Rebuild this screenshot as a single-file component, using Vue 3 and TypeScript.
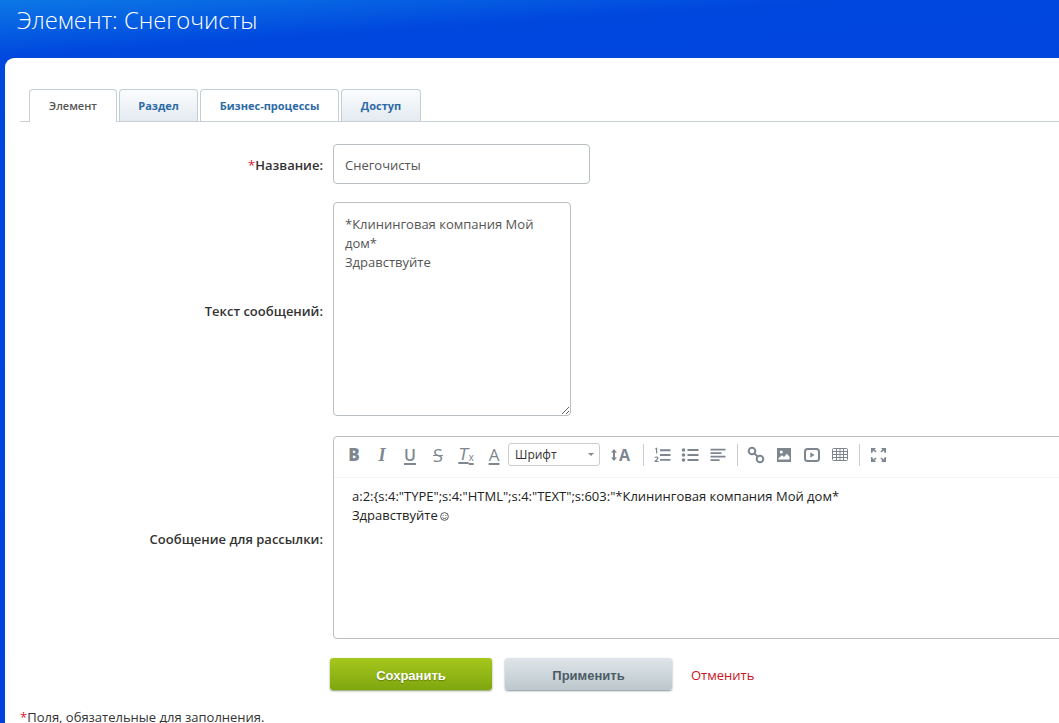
<template>
  <div class="page">
    <h1 class="title">Элемент: {{ name }}</h1>
    <div class="sheet">
      <div class="tabs">
        <div
          v-for="tab in tabs"
          :key="tab.label"
          class="tab"
          :class="tab.kind"
        >{{ tab.label }}</div>
      </div>

      <form class="form" @submit.prevent>
        <div class="row row-name">
          <label class="label"><span class="req">*</span>Название:</label>
          <input class="input" type="text" :value="name" />
        </div>
        <div class="row row-text">
          <label class="label">Текст сообщений:</label>
          <textarea class="area" :value="messageText"></textarea>
        </div>
        <div class="row row-editor">
          <label class="label">Сообщение для рассылки:</label>
          <div class="editor">
            <div class="toolbar">
              <span class="tool t-bold">B</span>
              <span class="tool t-italic">I</span>
              <span class="tool t-under">U</span>
              <span class="tool t-strike">S</span>
              <span class="tool t-clear">T<small>x</small></span>
              <span class="tool t-color">A</span>
              <div class="select">Шрифт<i class="caret"></i></div>
              <span class="tool t-size">
                <svg width="8" height="14" viewBox="0 0 8 14"><path d="M4 1 7 4.500H5V9.500H7L4 13 1 9.500H3V4.500H1Z" /></svg>
                <b>A</b>
              </span>
              <i class="sep"></i>
              <span class="tool">
                <svg width="18" height="16" viewBox="0 0 18 16">
                  <path d="M2.300 1.300 4.200 .5V6.500H3V2.300L2.300 2.500Z" />
                  <path d="M1.500 15V14C3.600 12.300 4.200 11.700 4.100 11.100 3.900 10.300 2.700 10.400 1.800 11L1.500 10C3 9 5.500 9.300 5.500 11.100 5.500 12 4.800 12.800 3.500 13.900H5.600V15Z" />
                  <path d="M7 2.300H17.500V4.200H7ZM7 7.100H17.500V9H7ZM7 11.900H17.500V13.800H7Z" />
                </svg>
              </span>
              <span class="tool">
                <svg width="18" height="16" viewBox="0 0 18 16">
                  <circle cx="2.500" cy="3" r="1.800" /><circle cx="2.500" cy="8" r="1.800" /><circle cx="2.500" cy="13" r="1.800" />
                  <path d="M6.500 2.100H17.500V3.900H6.500ZM6.500 7.100H17.500V8.900H6.500ZM6.500 12.100H17.500V13.900H6.500Z" />
                </svg>
              </span>
              <span class="tool">
                <svg width="16" height="14" viewBox="0 0 16 14">
                  <path d="M.500 .800H15.500V2.500H.500ZM.500 4.300H11.500V6H.500ZM.500 7.800H15.500V9.500H.500ZM.500 11.300H9.500V13H.500Z" />
                </svg>
              </span>
              <i class="sep"></i>
              <span class="tool">
                <svg width="18" height="18" viewBox="0 0 18 18" class="outline">
                  <circle cx="5" cy="5" r="3.300" /><circle cx="13" cy="13" r="3.300" />
                  <path d="M7.500 7.500 10.500 10.500" />
                </svg>
              </span>
              <span class="tool">
                <svg width="14" height="14" viewBox="0 0 14 14">
                  <path fill-rule="evenodd" d="M0 0H14V14H0ZM1.500 11.500H12.500V8.800L9.800 5.800 7 9 5 7.300 1.500 10.300Z" />
                  <circle class="spot" cx="4.300" cy="4" r="1.500" />
                </svg>
              </span>
              <span class="tool">
                <svg width="16" height="14" viewBox="0 0 16 14" class="outline">
                  <rect x="1" y="1" width="14" height="12" rx="2.500" />
                  <path class="solid" d="M6.300 4.300 10.500 7 6.300 9.700Z" />
                </svg>
              </span>
              <span class="tool">
                <svg width="16" height="13" viewBox="0 0 16 13" class="outline thin">
                  <rect x=".5" y=".5" width="15" height="12" rx="1" />
                  <path d="M.5 3.500H15.500M.5 6.500H15.500M.5 9.500H15.500M4.500 .5V12.500M8 .5V12.500M11.500 .5V12.500" />
                </svg>
              </span>
              <i class="sep"></i>
              <span class="tool">
                <svg width="15" height="14" viewBox="0 0 15 14">
                  <path d="M0 0H5L3.600 1.400 5.600 3.400 4.400 4.600 2.400 2.600 1.300 4.800 0 5ZM15 0H10L11.400 1.400 9.400 3.400 10.600 4.600 12.600 2.600 13.700 4.800 15 5ZM0 14H5L3.600 12.600 5.600 10.600 4.400 9.400 2.400 11.400 1.300 9.200 0 9ZM15 14H10L11.400 12.600 9.400 10.600 10.600 9.400 12.600 11.400 13.700 9.200 15 9Z" />
                </svg>
              </span>
            </div>
            <div class="content">
              <div>{{ editorLine }}</div>
              <div class="line-smile">Здравствуйте
                <svg class="smile" width="9" height="9" viewBox="0 0 10 10">
                  <circle cx="5" cy="5" r="4.300" />
                  <path d="M2.800 6C3.300 7.600 6.700 7.600 7.200 6" />
                  <path d="M3.500 3.300V4.300M6.500 3.300V4.300" />
                </svg>
              </div>
            </div>
          </div>
        </div>

        <div class="actions">
          <button class="btn btn-save" type="submit">Сохранить</button>
          <button class="btn btn-apply" type="button">Применить</button>
          <a class="cancel" href="#">Отменить</a>
        </div>
      </form>

      <p class="note"><span class="req">*</span>Поля, обязательные для заполнения.</p>
    </div>
  </div>
</template>

<script setup lang="ts">
const name = 'Снегочисты'
const messageText = '*Клининговая компания Мой дом*\nЗдравствуйте'
const editorLine = 'a:2:{s:4:"TYPE";s:4:"HTML";s:4:"TEXT";s:603:"*Клининговая компания Мой дом*'

const tabs = [
  { label: 'Элемент', kind: 'active' },
  { label: 'Раздел', kind: 'plain' },
  { label: 'Бизнес-процессы', kind: 'light' },
  { label: 'Доступ', kind: 'plain' }
]
</script>

<style>
html,
body {
  margin: 0;
  overflow: hidden;
}
</style>

<style scoped>
.page {
  height: 723px;
  overflow: hidden;
  background: linear-gradient(176deg, #0c78e6 0, #0047de 58px, #0040e0 100%);
  font-family: "Open Sans", "Liberation Sans", sans-serif;
}

.title {
  margin: 0;
  height: 58px;
  box-sizing: border-box;
  padding: 2px 0 0 17px;
  color: #fff;
  font-size: 23.8px;
  font-weight: 300;
  line-height: 36px;
}

.sheet {
  margin-left: 5px;
  height: 665px;
  box-sizing: border-box;
  padding-top: 31px;
  background: #fff;
  border-radius: 9px 0 0 0;
}

.tabs {
  display: grid;
  grid-template-columns: 88px 79px 139px 80px;
  column-gap: 2px;
  box-sizing: border-box;
  height: 33px;
  margin-left: 15px;
  padding-left: 9px;
  border-bottom: 1px solid #c9d0d4;
}

.tab {
  height: 32px;
  box-sizing: border-box;
  border: 1px solid #c3ced4;
  border-bottom: none;
  border-radius: 4px 4px 0 0;
  color: #2c6aa6;
  font-size: 11px;
  font-weight: 700;
  line-height: 32px;
  text-align: center;
}

.tab.plain {
  background: linear-gradient(#fbfcfd, #e3ebf1);
}

.tab.light {
  background: #fff;
}

.tab.active {
  height: 33px;
  background: #fff;
  color: #555;
  font-weight: 600;
}

.form {
  display: flex;
  flex-direction: column;
  padding-top: 22px;
}

.row {
  display: grid;
  grid-template-columns: 318px 1fr;
  column-gap: 10px;
  align-items: center;
}

.row-text {
  margin-top: 18px;
}

.row-editor {
  margin-top: 20px;
}

.label {
  padding-top: 2px;
  text-align: right;
  color: #333;
  font-size: 13px;
  font-weight: 600;
}

.row-text .label {
  padding-top: 4px;
}

.req {
  color: #e3142d;
  font-weight: 400;
}

.input,
.area {
  display: block;
  box-sizing: border-box;
  padding: 0 11px;
  border: 1px solid #b9bec2;
  border-radius: 4px;
  outline: none;
  background: #fff;
  color: #555;
  font-family: inherit;
  font-size: 13px;
}

.input {
  width: 257px;
  height: 40px;
  padding-top: 2px;
}

.area {
  width: 238px;
  height: 214px;
  padding-top: 12px;
  line-height: 19px;
}

.editor {
  width: 800px;
  height: 203px;
  box-sizing: border-box;
  border: 1px solid #b9bec2;
  border-radius: 4px;
}

.toolbar {
  display: flex;
  align-items: center;
  box-sizing: border-box;
  height: 41px;
  padding: 0 0 5px 6px;
  border-bottom: 1px solid #f5f6f7;
}

.tool {
  display: flex;
  flex: none;
  align-items: center;
  justify-content: center;
  width: 28px;
  height: 24px;
  color: #7e8790;
  fill: #7e8790;
  font-size: 16px;
  line-height: 1;
}

.spot {
  fill: #fff;
}

.outline {
  fill: none;
  stroke: #7e8790;
  stroke-width: 2;
}

.outline.thin {
  stroke-width: 1;
}

.outline .solid {
  fill: #7e8790;
  stroke: none;
}

.t-bold {
  font-weight: 800;
  font-size: 17px;
}

.t-italic {
  font-family: "Liberation Serif", serif;
  font-size: 18px;
  font-style: italic;
  font-weight: 700;
}

.t-under {
  text-decoration: underline;
  text-decoration-thickness: 2px;
  text-underline-offset: 2px;
  font-weight: 600;
}

.t-strike {
  text-decoration: line-through;
  font-size: 18px;
}

.t-clear {
  font-family: "Liberation Sans", sans-serif;
  font-size: 17px;
  font-style: italic;
  text-decoration: underline;
  text-decoration-thickness: 2px;
  text-underline-offset: 2px;
}

.t-clear small {
  margin-top: 7px;
  font-size: 10px;
  font-style: normal;
}

.t-color {
  text-decoration: underline;
  text-decoration-thickness: 2px;
  text-underline-offset: 2px;
  font-size: 17px;
}

.t-size {
  gap: 1px;
  margin-right: 4px;
}

.t-size b {
  font-size: 16px;
}

.select {
  position: relative;
  flex: none;
  box-sizing: border-box;
  width: 92px;
  height: 23px;
  margin-right: 6px;
  padding-left: 6px;
  border: 1px solid #c9cdd1;
  border-radius: 3px;
  color: #333;
  font-size: 12px;
  line-height: 21px;
}

.caret {
  position: absolute;
  top: 9px;
  right: 5px;
  border: 3px solid transparent;
  border-top: 3px solid #888;
}

.sep {
  flex: none;
  width: 1px;
  height: 22px;
  margin: 0 4px 0 5px;
  background: #c8ccd0;
}

.content {
  padding: 9px 18px;
  color: #222;
  font-size: 13px;
  line-height: 19px;
}

.line-smile {
  display: flex;
  align-items: center;
  gap: 2px;
}

.smile {
  margin-top: 2px;
  fill: none;
  stroke: #333;
  stroke-width: 0.9;
}

.actions {
  display: flex;
  align-items: center;
  height: 32px;
  margin-top: 19px;
  padding-left: 325px;
}

.btn {
  height: 32px;
  padding: 2px 0 0;
  border: none;
  border-radius: 3px;
  font-family: "Liberation Sans", sans-serif;
  font-size: 13px;
  font-weight: 700;
}

.btn-save {
  width: 162px;
  background: linear-gradient(#a6c71c, #7ea60f);
  box-shadow: 0 1px 2px rgba(60, 80, 0, 0.6);
  color: #fff;
  text-shadow: 0 1px 1px rgba(60, 80, 0, 0.5);
}

.btn-apply {
  width: 167px;
  margin-left: 13px;
  background: linear-gradient(#dfe5e8, #bcc8ce);
  box-shadow: 0 1px 2px rgba(50, 70, 80, 0.6);
  color: #4c5c66;
}

.cancel {
  margin: 2px 0 0 19px;
  color: #c8141e;
  font-size: 13px;
  text-decoration: none;
}

.note {
  margin: 19px 0 0 15px;
  color: #333;
  font-size: 13px;
  line-height: 17px;
}
</style>
